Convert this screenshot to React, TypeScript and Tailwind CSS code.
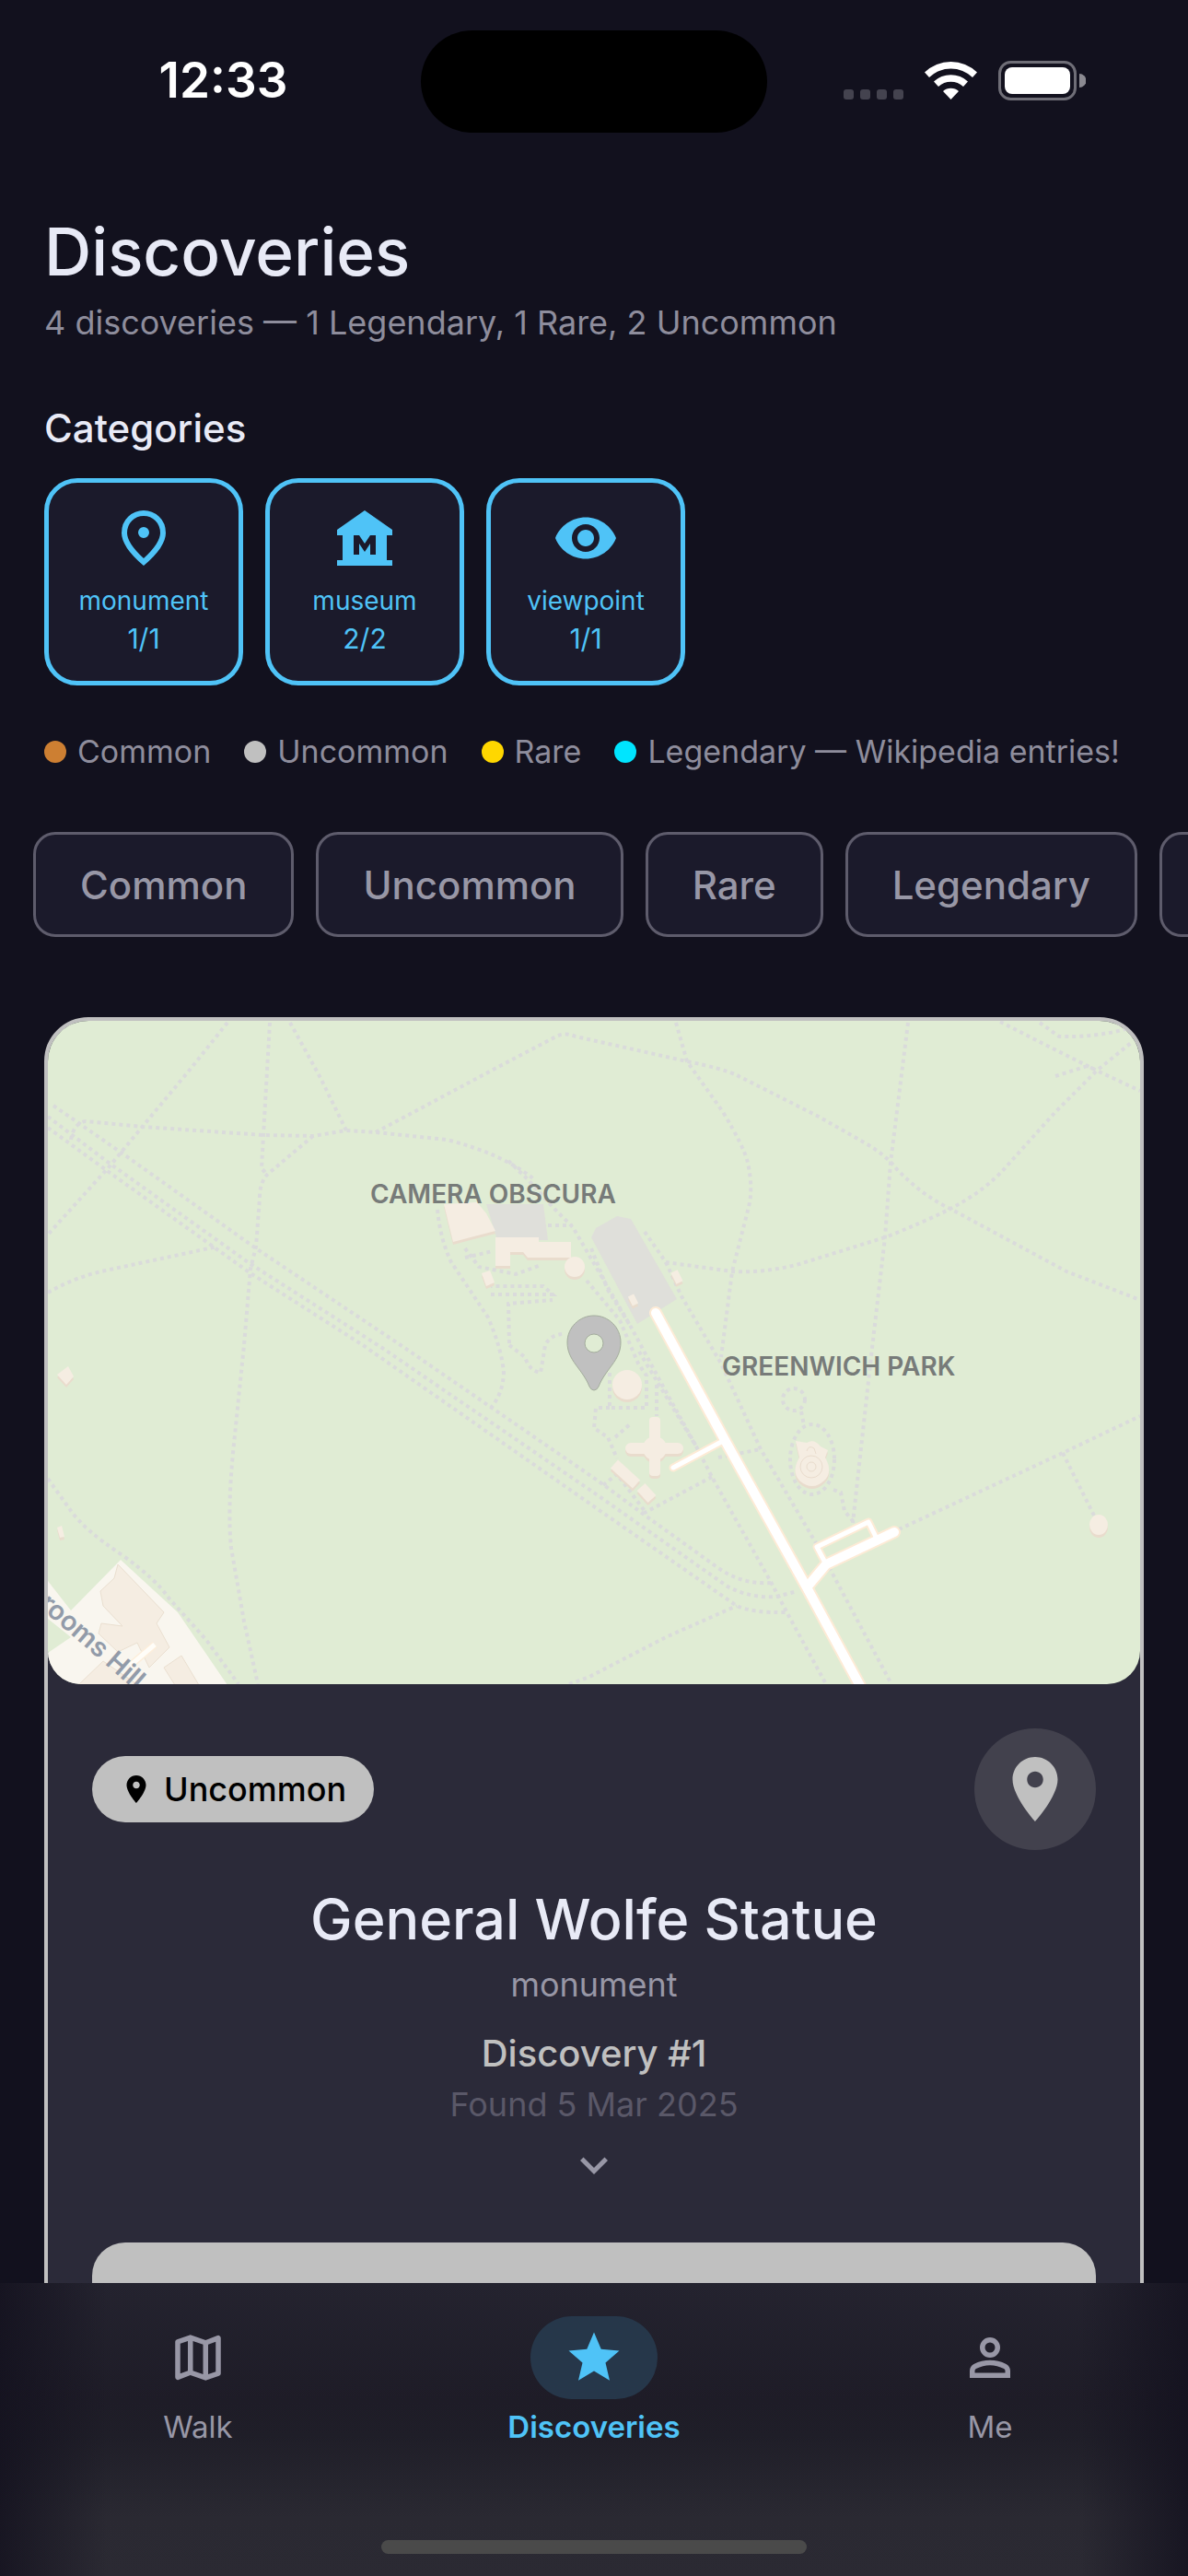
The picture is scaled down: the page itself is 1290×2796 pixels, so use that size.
import React, { useState } from "react";

type IconProps = { className?: string };

const PlaceIcon = ({ className }: IconProps) => (
   <svg viewBox="0 0 24 24" fill="currentColor" className={className} aria-hidden="true">
      <path d="M12 2C8.13 2 5 5.13 5 9c0 5.25 7 13 7 13s7-7.75 7-13c0-3.87-3.13-7-7-7zm0 9.5c-1.38 0-2.5-1.12-2.5-2.5s1.12-2.5 2.5-2.5 2.5 1.12 2.5 2.5-1.12 2.5-2.5 2.5z" />
   </svg>
);

const LocationIcon = ({ className }: IconProps) => (
   <svg viewBox="0 -960 960 960" fill="currentColor" className={className} aria-hidden="true">
      <path d="M480-480q33 0 56.5-23.5T560-560q0-33-23.5-56.5T480-640q-33 0-56.5 23.5T400-560q0 33 23.5 56.5T480-480Zm0 294q122-112 181-203.5T720-552q0-109-69.5-178.5T480-800q-101 0-170.5 69.5T240-552q0 71 59 162.5T480-186Zm0 106Q319-217 239.5-334.5T160-552q0-150 96.5-239T480-880q127 0 223.5 89T800-552q0 100-79.5 217.5T480-80Z" />
   </svg>
);

const MuseumIcon = ({ className }: IconProps) => (
   <svg viewBox="0 0 24 24" fill="currentColor" className={className} aria-hidden="true">
      <path d="M22 11V9L12 2 2 9v2h2v9H2v2h20v-2h-2v-9h2zm-6 7h-2v-4l-2 3-2-3v4H8v-7h2l2 3 2-3h2v7z" />
   </svg>
);

const EyeIcon = ({ className }: IconProps) => (
   <svg viewBox="0 0 24 24" fill="currentColor" className={className} aria-hidden="true">
      <path d="M12 4.5C7 4.5 2.73 7.61 1 12c1.73 4.39 6 7.5 11 7.5s9.27-3.11 11-7.5c-1.73-4.39-6-7.5-11-7.5zM12 17c-2.76 0-5-2.24-5-5s2.24-5 5-5 5 2.24 5 5-2.24 5-5 5zm0-8c-1.66 0-3 1.34-3 3s1.34 3 3 3 3-1.34 3-3-1.34-3-3-3z" />
   </svg>
);

const MapIcon = ({ className }: IconProps) => (
   <svg viewBox="0 -960 960 960" fill="currentColor" className={className} aria-hidden="true">
      <path d="m600-120-240-84-186 72q-20 8-37-4.500T120-170v-560q0-13 7.500-23t20.500-15l212-72 240 84 186-72q20-8 37 4.500t17 33.500v560q0 13-7.500 23T812-192l-212 72Zm-40-98v-468l-160-56v468l160 56Zm80 0 120-40v-474l-120 46v468Zm-440-10 120-46v-468l-120 40v474Z" />
   </svg>
);

const StarIcon = ({ className }: IconProps) => (
   <svg viewBox="0 0 24 24" fill="currentColor" className={className} aria-hidden="true">
      <path d="M12 17.270 18.180 21l-1.640-7.030L22 9.240l-7.190-.61L12 2 9.190 8.630 2 9.240l5.460 4.730L5.820 21z" />
   </svg>
);

const PersonIcon = ({ className }: IconProps) => (
   <svg viewBox="0 -960 960 960" fill="currentColor" className={className} aria-hidden="true">
      <path d="M480-480q-66 0-113-47t-47-113q0-66 47-113t113-47q66 0 113 47t47 113q0 66-47 113t-113 47ZM160-160v-112q0-34 17.500-62.500T224-378q62-31 126-46.500T480-440q66 0 130 15.500T736-378q29 15 46.500 43.500T800-272v112H160Zm80-80h480v-32q0-11-5.500-20T700-306q-54-27-109-40.500T480-360q-56 0-111 13.500T260-306q-9 5-14.500 14t-5.500 20v32Zm240-320q33 0 56.500-23.500T560-640q0-33-23.500-56.500T480-720q-33 0-56.500 23.500T400-640q0 33 23.500 56.500T480-560Z" />
   </svg>
);

const ChevronIcon = ({ className }: IconProps) => (
   <svg viewBox="0 0 24 24" fill="currentColor" className={className} aria-hidden="true">
      <path d="M16.590 8.590 12 13.170 7.410 8.590 6 10l6 6 6-6z" />
   </svg>
);

const categories = [
   { name: "monument", count: "1/1", Icon: LocationIcon },
   { name: "museum", count: "2/2", Icon: MuseumIcon },
   { name: "viewpoint", count: "1/1", Icon: EyeIcon },
];

const legend = [
   { label: "Common", dot: "bg-[#cd7f32]" },
   { label: "Uncommon", dot: "bg-[#c0c0c0]" },
   { label: "Rare", dot: "bg-[#ffd700]" },
   { label: "Legendary — Wikipedia entries!", dot: "bg-[#00e5ff]" },
];

const filters = ["Common", "Uncommon", "Rare", "Legendary", "monument"];

const tabs = [
   { name: "Walk", Icon: MapIcon },
   { name: "Discoveries", Icon: StarIcon },
   { name: "Me", Icon: PersonIcon },
];

const footpaths = [
   "M247 1110L207 1160 157 1220 118 1267 52 1340",
   "M293 1110L286 1232 284 1268 290 1275",
   "M315 1110L348 1170 376 1227",
   "M77 1237Q80 1219 93 1217L155 1223 286 1232 340 1233 376 1227 408 1229 485 1237Q545 1252 580 1280",
   "M340 1233L290 1275Q282 1284 282 1300L278 1353 272 1377 265 1460 253 1577Q247 1640 251 1680L265 1760 280 1828",
   "M408 1229L543 1157 604 1125Q613 1120 625 1125L746 1152Q785 1160 800 1167L889 1212 940 1241Q962 1254 972 1267 1000 1297 1032 1312L1158 1380 1238 1411",
   "M58 1200L133 1252 278 1355 435 1460 649 1607 698 1643 780 1702Q806 1720 837 1718",
   "M52 1212L118 1262 272 1372 415 1463 649 1623 790 1722Q815 1735 843 1733L866 1727",
   "M52 1224L118 1272 272 1382 394 1460 649 1638 800 1743Q818 1751 854 1750",
   "M52 1403Q80 1387 110 1380L236 1353",
   "M734 1110L746 1152 785 1207Q808 1245 812 1262 818 1290 813 1310L795 1380 783 1473",
   "M986 1110L967 1262 961 1343 947 1463 926 1653",
   "M700 1337L723 1370 795 1380Q830 1382 868 1372L961 1343Q1000 1328 1032 1312 1070 1292 1092 1267L1146 1207 1191 1162 1228 1132",
   "M1086 1109L1137 1135 1191 1162 1238 1184",
   "M1129 1110L1150 1125Q1190 1126 1222 1117",
   "M1146 1168L1181 1157 1191 1162",
   "M723 1370L740 1407 783 1480 826 1573 889 1680 905 1710 968 1828",
   "M694 1467L756 1570 773 1603 837 1717 856 1753 897 1828",
   "M773 1603L698 1643",
   "M618 1828L640 1820 723 1777 800 1743",
   "M976 1660L1154 1577 1238 1537M1154 1577L1189 1647",
   "M52 1605L75 1637Q90 1660 133 1688 170 1715 182 1733L224 1780 259 1828",
   "M475 1313Q478 1345 490 1370L530 1430Q545 1465 547 1490 546 1513 533 1528",
   "M533 1405H600L590 1396H533M553 1458L552 1415 600 1411",
   "M553 1460L570 1473Q575 1488 587 1490L592 1460Q598 1448 613 1448",
   "M552 1260L573 1280 600 1310 622 1332 650 1380 685 1440 720 1505 756 1570",
   "M637 1390L673 1433 693 1480 702 1493V1528H662V1490M662 1528H647L645 1550 660 1560 670 1583",
   "M642 1355L660 1400 685 1440M713 1503V1537M668 1560L685 1545M595 1330H622",
   "M505 1355L520 1375 560 1383 585 1374M505 1365L535 1358",
   "M655 1612L670 1600 700 1640M780 1582L826 1573",
   "M870 1532L873 1547M905 1617L913 1620 917 1640 927 1652",
];

const GreenwichMap = () => (
   <svg
      viewBox="52 1108 1186 720"
      preserveAspectRatio="xMidYMid slice"
      className="block h-[720px] w-full rounded-b-[36px] bg-[#e0ecd4]"
      role="img"
      aria-label="Map of Greenwich Park"
   >
      {/* car parks */}
      <g fill="#dfdfda">
         <path d="M642 1343L647 1333 670 1320 685 1323 735 1410 692 1437Z" />
         <path d="M528 1307H590L595 1346H540Z" />
      </g>

      <g fill="none" stroke="#dadbdb" strokeWidth="4" strokeDasharray="4 4">
         {footpaths.map((d) => (
            <path key={d} d={d} />
         ))}
         <circle cx="862" cy="1519" r="12" />
         <ellipse cx="882" cy="1584" rx="24" ry="38" />
      </g>

      {/* houses on the hill */}
      <path fill="#f9f6ef" d="M52 1716L77 1748 131 1693 193 1750 247 1829H52V1794L77 1777 52 1757Z" />
      <g fill="#f5ede2" stroke="#eadfd0" strokeWidth="1">
         <path d="M128 1698L178 1750 170 1762 184 1788 162 1810 149 1783 128 1793 107 1773 110 1762 133 1765 112 1743 109 1727 124 1713Z" />
         <path d="M197 1797L216 1829H190L178 1810Z" />
         <path d="M112 1803L85 1829H150Z" />
      </g>
      <path d="M168 1785L141 1808" stroke="#fdeedb" strokeWidth="8" />
      <path d="M168 1785L141 1808" stroke="#fffdf8" strokeWidth="5" />

      {/* building shadows, then the roofs */}
      {[
         { y: 3, color: "#e9dccd" },
         { y: 0, color: "#f5ede2" },
      ].map(({ y, color }) => (
         <g key={y} transform={`translate(0 ${y})`} fill={color} stroke="none">
            <path d="M482 1307L518 1305 528 1317 538 1336 492 1348Z" />
            <path d="M538 1343H585V1348H620V1365H573L568 1359H554V1374H538Z" />
            <circle cx="624" cy="1375" r="11" />
            <path d="M523 1382L532 1379 537 1392 528 1396Z" />
            <circle cx="681" cy="1503" r="16" />
            <circle cx="711" cy="1572" r="13" />
            <rect x="705" y="1538" width="12" height="64" rx="4" />
            <rect x="679" y="1566" width="63" height="12" rx="6" />
            <path d="M667 1589L691 1611M696 1614L708 1627" stroke={color} strokeWidth="12" />
            <path d="M732 1380L738 1392" stroke={color} strokeWidth="8" />
            <path d="M685 1406L690 1416" stroke={color} strokeWidth="7" />
            <path d="M864 1564L876 1566Q884 1561 891 1570L899 1574 896 1582Q905 1598 895 1607 882 1619 868 1607 859 1597 868 1582Z" />
            <path d="M62 1492L74 1483 80 1494 72 1503Z" />
            <path d="M62 1658L67 1656 70 1668 65 1669Z" />
            <ellipse cx="1193" cy="1655" rx="10" ry="11" />
         </g>
      ))}
      <g fill="none" stroke="#e9dccd" strokeWidth="1">
         <circle cx="881" cy="1592" r="12" />
         <circle cx="881" cy="1592" r="5" />
         <path d="M876 1575Q878 1568 884 1572L886 1578" />
      </g>

      {/* roads */}
      <g fill="none" strokeLinecap="round" strokeLinejoin="round">
         <g stroke="#fdebd6">
            <path strokeWidth="14" d="M712 1425L787 1563 876 1723 934 1830M876 1723L897 1698 971 1663" />
            <path strokeWidth="9" d="M787 1563L731 1593M897 1698L887 1679 943 1652 952 1670" />
         </g>
         <g stroke="#fff">
            <path strokeWidth="10" d="M712 1425L787 1563 876 1723 934 1830M876 1723L897 1698 971 1663" />
            <path strokeWidth="5" d="M787 1563L731 1593M897 1698L887 1679 943 1652 952 1670" />
         </g>
      </g>

      <g className="font-['Inter',sans-serif] font-semibold" fill="#777b79">
         <text x="402" y="1306" fontSize="28">CAMERA OBSCURA</text>
         <text x="784" y="1493" fontSize="28">GREENWICH PARK</text>
         <text transform="translate(25 1729) rotate(41)" fontSize="29" fill="#929ba9">Crooms Hill</text>
      </g>

      {/* marker */}
      <path
         fill="#c0c0c0"
         stroke="#a4ad9d"
         strokeWidth="1"
         fillRule="evenodd"
         d="M645 1428C629 1428 616 1441 616 1457C616 1467 620 1474 625 1481C631 1489 637 1497 640 1505Q642 1509 645 1509T650 1505C653 1497 659 1489 665 1481C670 1474 674 1467 674 1457C674 1441 661 1428 645 1428ZM645 1448a10 10 0 1 1 0 20 10 10 0 0 1 0-20Z"
      />
   </svg>
);

const StatusBar = () => (
   <header className="grid shrink-0 grid-cols-[1fr_376px_1fr] items-center pt-[33px] text-white">
      <span className="mb-1 pl-7 text-center text-[53px] leading-[60px] font-semibold">12:33</span>
      <span className="h-[111px] rounded-full bg-black" />
      <svg viewBox="0 0 264 44" className="mb-1 ml-[82px] h-11 w-[264px]" aria-hidden="true">
         <g fill="#44434f">
            <rect x="1" y="32" width="11" height="11" rx="3" />
            <rect x="19" y="32" width="11" height="11" rx="3" />
            <rect x="37" y="32" width="11" height="11" rx="3" />
            <rect x="55" y="32" width="11" height="11" rx="3" />
         </g>
         <g fill="#fff">
            <path d="M89 13.500A41 41 0 0 1 146 13.500L141 19A34 34 0 0 0 94 19Z" />
            <path d="M99 23.500A27 27 0 0 1 136 23.500L131 29A20 20 0 0 0 104 29Z" />
            <path d="M109 34A13 13 0 0 1 126 34L117.500 43Z" />
         </g>
         <rect x="170.500" y="2.500" width="82" height="40" rx="12" fill="none" stroke="#6f6e77" strokeWidth="3" />
         <rect x="176" y="8" width="71" height="29" rx="8" fill="#fff" />
         <path d="M257 15a7 7 0 0 1 0 15Z" fill="#8b8a91" />
      </svg>
   </header>
);

export default function App() {
   const [activeTab, setActiveTab] = useState("Discoveries");
   const [filter, setFilter] = useState("");

   return (
      <div className="flex h-screen flex-col overflow-hidden bg-[#12111e] font-['Inter',sans-serif] text-[#e8eaf6]">
         <StatusBar />

         <main className="min-h-0 flex-1 overflow-x-hidden overflow-y-auto px-12 pt-21 [scrollbar-width:none]">
            <h1 className="text-[71px] leading-[90px] font-medium">Discoveries</h1>
            <p className="mt-2 text-[36px] leading-[48px] text-[#8e8d9c]">
               4 discoveries — 1 Legendary, 1 Rare, 2 Uncommon
            </p>

            <h2 className="mt-16 text-[42px] leading-[54px] font-medium">Categories</h2>
            <div className="mt-[27px] flex gap-6">
               {categories.map(({ name, count, Icon }) => (
                  <button
                     key={name}
                     className="flex h-[225px] w-[216px] flex-col items-center rounded-[36px] border-[5px] border-[#4fc3f7] bg-[#1b1a2b] pt-6 text-[#4fc3f7]"
                  >
                     <Icon className="size-[72px]" />
                     <span className="mt-3 text-[28px] leading-[40px]">{name}</span>
                     <span className="text-[30px] leading-[42px]">{count}</span>
                  </button>
               ))}
            </div>

            <ul className="mt-12 flex gap-9 whitespace-nowrap">
               {legend.map(({ label, dot }) => (
                  <li key={label} className="flex items-center gap-3 text-[34px] leading-[48px] text-[#8e8d9c]">
                     <span className={`size-6 rounded-full ${dot}`} />
                     {label}
                  </li>
               ))}
            </ul>

            <div className="-mx-3 mt-[63px] flex gap-6">
               {filters.map((name) => (
                  <button
                     key={name}
                     aria-pressed={filter === name}
                     onClick={() => setFilter(name)}
                     className="h-[114px] shrink-0 rounded-3xl border-3 border-[#5e5c6c] bg-[#1b1a2b] px-12 text-[42px] font-medium text-[#9897a6]"
                  >
                     {name}
                  </button>
               ))}
            </div>

            <article className="mt-[87px] overflow-hidden rounded-[48px] border-4 border-[#c0c0c0] bg-[#2b2a39]">
               <GreenwichMap />
               <div className="flex flex-col items-center p-12 text-center">
                  <div className="flex w-full items-center justify-between">
                     <span className="flex h-[72px] items-center gap-3 rounded-full bg-[#c0c0c0] px-[30px] text-[36px] font-medium text-black">
                        <PlaceIcon className="size-9" />
                        Uncommon
                     </span>
                     <span className="flex size-[132px] items-center justify-center rounded-full bg-[#42414d] text-[#c0c0c0]">
                        <PlaceIcon className="size-21" />
                     </span>
                  </div>
                  <h3 className="mt-9 text-[61px] leading-[78px] font-medium">General Wolfe Statue</h3>
                  <p className="mt-2 text-[36px] leading-[48px] text-[#9897a6]">monument</p>
                  <p className="mt-6 text-[40px] leading-[54px] font-medium text-[#c0c0c0]">Discovery #1</p>
                  <p className="mt-1 text-[36px] leading-[48px] text-[#5a5868]">Found 5 Mar 2025</p>
                  <ChevronIcon className="mt-3 size-15 text-[#9897a6]" />
                  <button aria-label="Open discovery" className="mt-[54px] h-36 w-full rounded-[36px] bg-[#c0c0c0]" />
               </div>
            </article>
         </main>

         <nav className="flex shrink-0 flex-col items-center bg-[linear-gradient(90deg,#13111ecc,#13111e00_9%,#13111e00_91%,#13111ecc),linear-gradient(180deg,#24232f,#1e1c27_40%,#1f1e28_52%,#2a2932_80%,#2b2a33)] pt-9">
            <div className="grid w-full grid-cols-3">
               {tabs.map(({ name, Icon }) => (
                  <button
                     key={name}
                     onClick={() => setActiveTab(name)}
                     className={
                        activeTab === name
                           ? "flex flex-col items-center font-semibold text-[#4fc3f7]"
                           : "flex flex-col items-center text-[#9897a6]"
                     }
                  >
                     <span className={activeTab === name ? "rounded-full bg-[#26374a] px-9 py-3" : "px-9 py-3"}>
                        <Icon className="size-[66px]" />
                     </span>
                     <span className="mt-[9px] text-[33px] leading-[42px]">{name}</span>
                  </button>
               ))}
            </div>
            <span className="mt-[102px] mb-6 h-[15px] w-[462px] rounded-full bg-[#4a4a4a]" />
         </nav>
      </div>
   );
}
